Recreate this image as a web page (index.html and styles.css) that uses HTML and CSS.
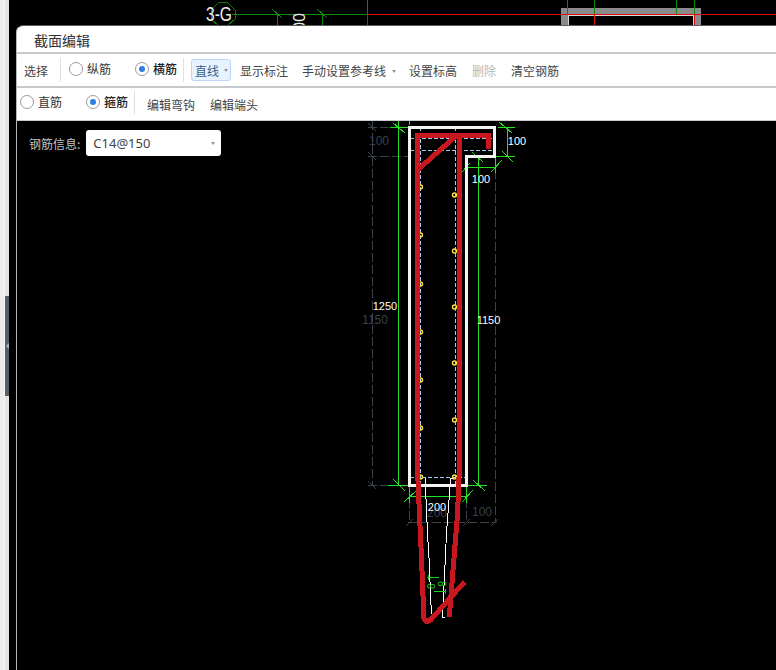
FILE: index.html
```html
<!DOCTYPE html>
<html lang="zh">
<head>
<meta charset="utf-8">
<title>截面编辑</title>
<link rel="stylesheet" href="styles.css">
</head>
<body>
<div class="page">
  <aside class="rail"><span class="rail-handle"><span class="rail-arrow"></span></span></aside>
  <main class="stage">
    <svg class="drawing" viewBox="0 0 776 30" width="776" height="30">
      <polygon class="g-thin" points="211,10 219,2 227,2 235,10 235,19 227,26 219,26 211,19"/>
      <path class="g-line" d="M232 14.5H367.5M367.5 0V14M277 14V25M322 14V25M272 9l10 9M317 9l10 9"/>
      <path class="frame" d="M564.5 25V11.5H697.5V25"/>
      <path class="frame-inner" d="M568.5 25V15.5H693.5V25"/>
      <path class="r-line" d="M367 14.5H776M367.5 14V25M594.5 14V25M694.5 14V25"/>
      <path class="g-line" d="M567.5 0V14M594.5 0V14M676.5 0V14M694.5 0V14"/>
      <text class="top-label" x="206" y="21" textLength="26" lengthAdjust="spacingAndGlyphs">3-G</text>
      <text class="top-rot" transform="translate(293,13) rotate(90)">00</text>
    </svg>
    <section class="dialog">
      <h1 class="dialog-title">截面编辑</h1>
      <div class="toolbar toolbar-main">
        <span class="tool tool-select">选择</span>
        <span class="sep sep-a"></span>
        <label class="radio radio-a"><span class="dot"></span>纵筋</label>
        <label class="radio radio-b radio-on"><span class="dot on"></span>横筋</label>
        <span class="sep sep-b"></span>
        <span class="tool-btn">直线<span class="caret"></span></span>
        <span class="tool tool-show">显示标注</span>
        <span class="tool tool-ref">手动设置参考线<span class="caret"></span></span>
        <span class="tool tool-level">设置标高</span>
        <span class="tool tool-del">删除</span>
        <span class="tool tool-clear">清空钢筋</span>
      </div>
      <div class="toolbar toolbar-sub">
        <label class="radio radio-c"><span class="dot"></span>直筋</label>
        <label class="radio radio-d radio-on"><span class="dot on"></span>箍筋</label>
        <span class="sep sep-c"></span>
        <span class="tool tool-hook">编辑弯钩</span>
        <span class="tool tool-end">编辑端头</span>
      </div>
      <div class="canvas">
        <div class="info">
          <span class="info-label">钢筋信息:</span>
          <span class="select">C14@150<span class="caret"></span></span>
        </div>
        <svg class="section" viewBox="0 121 760 549" width="760" height="549">
          <g transform="translate(-17,0)">
            <path class="dim-dark" d="M372.5 121V485M368 127.5H408M368 156.5H408M368 485.5H408M495.5 158V523M408 522.5H497M409.5 487V523M466.5 487V523"/>
            <path class="dim-tick" d="M368 123l8 8M368 152l8 8M368 481l8 8M406 526l7-7M463 526l7-7M491 526l7-7"/>
            <g class="ghost">
              <text x="379" y="145">100</text>
              <text x="375" y="324">1150</text>
              <text x="437" y="517">200</text>
              <text x="482" y="516">100</text>
            </g>
            <path class="green" d="M398.5 121V485M478.5 157V485M390 127.5H408M498 127.5H515M468 156.5H515M507.5 127V157M466 167.5H495M466.5 158V173M495.5 158V173M409 496.5H467M409.5 487V503M466.5 487V503M388 485.5H408M468 485.5H487M409.5 121V125M393 123l12 10M499 122l13 11M502 151l11 11M472 152l11 10M462 172l8-9M491 172l11-12M393 479l12 12M473 480l12 11M404 502l13-12M462 502l11-12"/>
            <path class="blue" d="M420.5 127V485M455.5 127V485M410 138.5H495M410 150.5H495M410 477.5H466"/>
            <g class="yellow">
              <circle cx="420.5" cy="187" r="2"/><circle cx="420.5" cy="235" r="2"/><circle cx="420.5" cy="284" r="2"/><circle cx="420.5" cy="332" r="2"/><circle cx="420.5" cy="380" r="2"/><circle cx="420.5" cy="428" r="2"/><circle cx="420.5" cy="477" r="2"/>
              <circle cx="454.5" cy="195" r="2"/><circle cx="454.5" cy="251" r="2"/><circle cx="454.5" cy="307" r="2"/><circle cx="454.5" cy="363" r="2"/><circle cx="454.5" cy="420" r="2"/><circle cx="454.5" cy="477" r="2"/>
            </g>
            <path class="outline" d="M409.5 127.5H494.5V156.5H466.5V485.5H409.5Z"/>
            <path class="thin-white" d="M425.5 478V487L427.5 533L429 558L431 605L432.5 618H430M454 478H450.5L450 487L446.5 533L445 565L442.5 617H445"/>
            <path class="small-green" d="M427 577.5H439M428.5 575V580M434 591.5H445M445.5 589V594"/>
            <g class="tiny">
              <text transform="translate(435,589) rotate(-90)">8</text>
              <text transform="translate(438,581) rotate(90)">8</text>
            </g>
            <path class="rebar" d="M417.5 138V470L419.5 515L421.5 558L423.5 608L424 619L427 621.5L431 619.5L464.5 582"/>
            <path class="rebar" d="M415 135H488.5V149"/>
            <path class="rebar" d="M459.5 133V465L457.5 515L454 558L450 608L449.5 617"/>
            <path class="rebar" d="M457 135L417.5 170"/>
            <g class="dim-text">
              <text x="517" y="145">100</text>
              <text x="481" y="183">100</text>
              <text x="385" y="310">1250</text>
              <text x="488.5" y="324">1150</text>
              <text x="437" y="511">200</text>
            </g>
          </g>
        </svg>
      </div>
    </section>
  </main>
</div>
</body>
</html>
```
FILE: styles.css
```css
* { box-sizing: border-box; }
html, body { margin: 0; height: 100%; background: #000; overflow: hidden; }
body { font-family: "Noto Sans CJK SC", "Noto Sans", sans-serif; color: #3a3a3a; }
.page { display: flex; width: 776px; height: 670px; }
.rail { flex: 0 0 9px; background: linear-gradient(to right, #ececec 0 4px, #f7f7f7 4px 5px, #e3e3e3 5px 9px); position: relative; }
.rail-handle { position: absolute; left: 5px; top: 296px; width: 4px; height: 100px; background: #56606a; display: flex; align-items: center; }
.rail-arrow { width: 0; height: 0; border-right: 3px solid #aab0b5; border-top: 3px solid transparent; border-bottom: 3px solid transparent; margin-left: 1px; }
.stage { flex: 1; position: relative; background: #000; }
.drawing { position: absolute; left: -9px; top: 0; display: block; shape-rendering: crispEdges; }
.g-line { stroke: #0a8a0a; stroke-width: 1; fill: none; }
.g-thin { stroke: #0a7a0a; stroke-width: 1; fill: none; }
.r-line { stroke: #d80d0d; stroke-width: 1; fill: none; }
.frame { stroke: #8a8a8a; stroke-width: 7; fill: none; }
.frame-inner { stroke: #d8d8d8; stroke-width: 1; fill: none; }
.top-label { fill: #eee; font: 20px "Liberation Sans", sans-serif; }
.top-rot { fill: #eee; font: 16px "Liberation Sans", sans-serif; }
.dialog { position: absolute; left: 7px; top: 25px; right: 0; bottom: 0; display: flex; flex-direction: column; background: #fff; border-top: 1px solid #5a5a5a; border-top-left-radius: 7px; border-left: 1px solid #b4b6ba; overflow: hidden; }
.dialog-title { flex: 0 0 26px; min-height: 0; margin: 0; padding: 0 0 0 17px; font-size: 14px; font-weight: 400; line-height: 28px; color: #303133; }
.toolbar { display: flex; align-items: center; background: #fff; border-top: 2px solid #c8c9cc; font-size: 12px; }
.toolbar-main { flex: 0 0 34px; }
.toolbar-sub { flex: 0 0 34px; padding-bottom: 2px; }
.tool { color: #444; white-space: nowrap; line-height: 18px; position: relative; top: 1px; }
.sep { width: 1px; height: 24px; background: #dcdfe6; flex: none; }
.radio { display: flex; align-items: center; gap: 4px; color: #333; white-space: nowrap; line-height: 18px; position: relative; top: -1px; }
.radio-on { color: #222; font-weight: 500; }
.dot { width: 14px; height: 14px; border: 1px solid #9a9a9a; border-radius: 50%; background: #fff; position: relative; flex: none; }
.dot.on::after { content: ""; position: absolute; left: 3px; top: 3px; width: 6px; height: 6px; border-radius: 50%; background: #2f7fe0; }
.caret { display: inline-block; width: 0; height: 0; border-top: 3px solid #909399; border-left: 2.5px solid transparent; border-right: 2.5px solid transparent; vertical-align: middle; }
.tool-select { margin-left: 7px; }
.sep-a { margin-left: 12px; }
.radio-a { margin-left: 8px; }
.radio-b { margin-left: 24px; }
.sep-b { margin-left: 6px; }
.tool-btn { margin-left: 7px; width: 40px; height: 22px; padding-left: 3px; display: flex; align-items: center; gap: 5px; color: #3a5f8a; background: #e8f3ff; border: 1px solid #b9d8f8; border-radius: 3px; }
.tool-show { margin-left: 9px; }
.tool-ref { margin-left: 14px; display: flex; align-items: center; gap: 6px; }
.tool-level { margin-left: 13px; }
.tool-del { margin-left: 15px; color: #b8b8b8; }
.tool-clear { margin-left: 15px; }
.radio-c { margin-left: 3px; }
.radio-d { margin-left: 24px; }
.sep-c { margin-left: 6px; }
.toolbar-sub .tool { top: 2px; }
.tool-hook { margin-left: 12px; }
.tool-end { margin-left: 15px; }
.canvas { flex: 1; position: relative; background: #000; border-top: 1px solid #c8c9cc; }
.info { position: absolute; left: 12px; top: 9px; display: flex; align-items: center; gap: 6px; z-index: 1; }
.info-label { font-size: 12px; color: #bfc4ca; white-space: nowrap; }
.select { width: 135px; height: 26px; padding: 0 6px 0 7px; display: flex; align-items: center; justify-content: space-between; background: #fff; border-radius: 3px; font: 13px "Noto Sans", sans-serif; color: #444; }
.section { display: block; position: absolute; left: 0; top: 0; shape-rendering: crispEdges; }
.dim-dark { stroke: #3a424c; stroke-width: 1; stroke-dasharray: 9 3; fill: none; }
.dim-tick { stroke: #3a424c; stroke-width: 1; fill: none; }
.ghost text { fill: #3a424c; font: 12px "Liberation Sans", sans-serif; text-anchor: middle; }
.green { stroke: #22e022; stroke-width: 1; fill: none; }
.blue { stroke: #a4c8f0; stroke-width: 1; stroke-dasharray: 4 2; fill: none; }
.yellow circle { fill: none; stroke: #ffe23c; stroke-width: 1.4; shape-rendering: auto; }
.outline { stroke: #f4f4f4; stroke-width: 3; fill: none; }
.thin-white { stroke: #fff; stroke-width: 1; fill: none; }
.small-green { stroke: #18d018; stroke-width: 1; fill: none; }
.tiny text { fill: #18d018; font: 10px "Liberation Sans", sans-serif; }
.rebar { stroke: #c8171f; stroke-width: 5; fill: none; stroke-linejoin: miter; }
.dim-text text { fill: #fff; font: 11px "Liberation Sans", sans-serif; text-anchor: middle; }
```
